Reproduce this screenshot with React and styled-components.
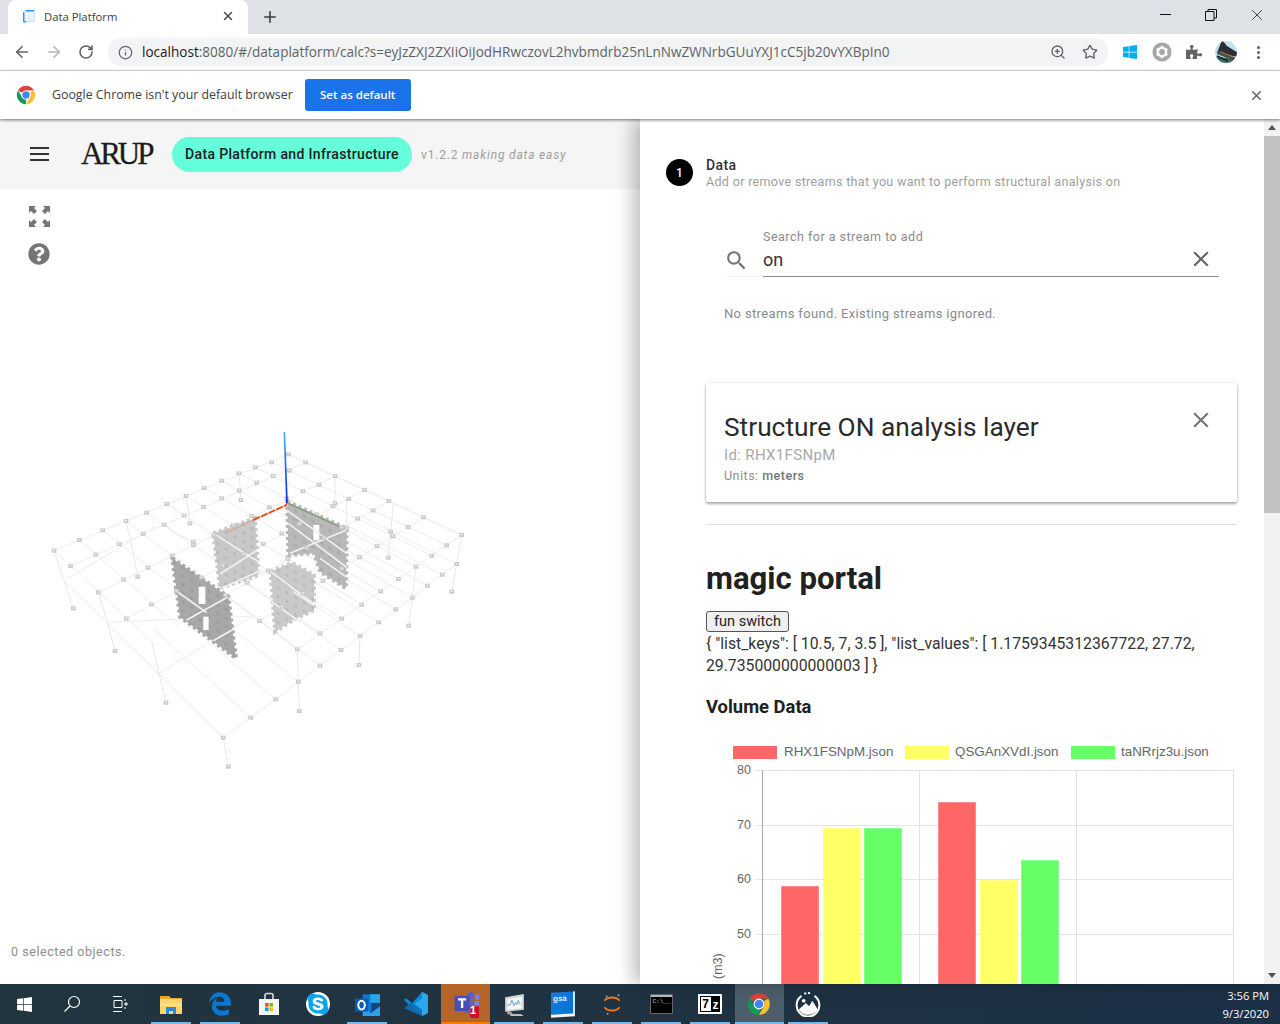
import React from "react";
import styled, { createGlobalStyle } from "styled-components";
import { ArrowLeft, ArrowRight, RotateCw, Info, ZoomIn, Star, MoreVertical, Plus, X } from "lucide-react";
import { FaQuestionCircle, FaPuzzlePiece, FaWindows, FaSkype, FaEdgeLegacy } from "react-icons/fa";

const Global = createGlobalStyle`
  html, body { margin: 0; padding: 0; overflow: hidden; background: #fff; }
  * { box-sizing: border-box; }
`;
const UI = `"Open Sans", "Noto Sans", sans-serif`;
const APP = `Roboto, "Liberation Sans", sans-serif`;

const Page = styled.div`display:flex;flex-direction:column;width:1280px;height:1024px;overflow:hidden;font-family:${APP};`;

const TabStrip = styled.div`display:flex;align-items:flex-end;height:34px;background:#dee1e6;padding-left:8px;`;
const Tab = styled.div`display:flex;align-items:center;width:240px;height:34px;padding:0 13px 2px 14px;background:#fff;border-radius:8px 8px 0 0;gap:8px;color:#3c4043;font:11.3px ${UI};`;
const TabTitle = styled.span`flex:1;`;
const NewTab = styled.div`display:flex;align-items:center;justify-content:center;width:44px;height:34px;color:#3c4043;`;
const Spacer = styled.div`flex:1;`;
const WinControls = styled.div`display:flex;align-self:flex-start;height:30px;`;
const WinButton = styled.div`display:flex;align-items:center;justify-content:center;width:46px;height:30px;color:#111;`;

const Toolbar = styled.div`display:flex;align-items:center;height:37px;border-bottom:1px solid #dadce0;background:#fff;padding-left:6px;`;
const NavButton = styled.div`display:flex;align-items:center;justify-content:center;width:32px;height:28px;color:${p => p.$dim ? "#b4b7bb" : "#5f6368"};`;
const Omnibox = styled.div`display:flex;align-items:center;width:1000px;height:28px;margin-left:6px;border-radius:14px;background:#f1f3f4;padding:0 2px 0 10px;color:#5f6368;`;
const Url = styled.div`flex:1;margin-left:9px;font:13.55px ${UI};color:#5f6368;white-space:nowrap;overflow:hidden;`;
const UrlHost = styled.span`color:#202124;`;
const OmniIcon = styled.div`display:flex;width:32px;justify-content:center;color:#5f6368;`;
const ExtSlot = styled.div`display:flex;align-items:center;justify-content:center;width:32px;color:#5f6368;`;
const Exts = styled.div`display:flex;align-items:center;margin-left:6px;`;

const InfoBar = styled.div`display:flex;align-items:center;position:relative;z-index:3;height:48px;background:#fff;padding-left:15px;box-shadow:0 1px 3px rgba(0,0,0,.55);`;
const InfoText = styled.div`margin-left:15px;padding-bottom:1px;font:12.35px ${UI};color:#3c4043;`;
const DefaultButton = styled.div`display:flex;align-items:center;justify-content:center;width:106px;height:32px;margin-left:12px;padding-bottom:2px;border-radius:3px;background:#1a73e8;color:#fff;font:600 11.5px ${UI};`;
const InfoClose = styled.div`display:flex;margin-right:16px;color:#5f6368;`;

const Main = styled.div`display:flex;flex:1;min-height:0;`;
const LeftPane = styled.div`display:flex;flex-direction:column;width:640px;`;
const AppHeader = styled.div`display:flex;align-items:center;height:70px;background:#f5f5f5;padding-left:30px;`;
const Burger = styled.div`display:flex;flex-direction:column;gap:4px;width:19px;`;
const BurgerLine = styled.div`height:2px;background:#333;`;
const Logo = styled.div`width:72px;margin-left:32px;font:31px "Liberation Serif", serif;letter-spacing:-3.1px;color:#1c1c1c;-webkit-text-stroke:.3px #1c1c1c;white-space:nowrap;`;
const Pill = styled.div`display:flex;align-items:center;justify-content:center;width:240px;height:35px;margin-left:19px;border-radius:18px;background:#64ffda;font:500 14px ${APP};letter-spacing:.34px;color:#212121;`;
const Version = styled.div`margin:2px 0 0 9px;font:12px ${APP};letter-spacing:.82px;color:#9e9e9e;`;
const Canvas = styled.div`position:relative;flex:1;`;
const Tools = styled.div`display:flex;flex-direction:column;align-items:center;gap:16px;width:22px;margin:17px 0 0 28px;color:#757575;`;
const Scene = styled.svg`position:absolute;left:40px;top:231px;`;
const Status = styled.div`position:absolute;left:11px;bottom:25px;font:12.5px ${APP};letter-spacing:.55px;color:#8d8d8d;`;

const RightPane = styled.div`display:flex;flex:1;position:relative;z-index:2;background:#fff;box-shadow:-6px 0 18px rgba(0,0,0,.28);min-width:0;`;
const Content = styled.div`flex:1;overflow:hidden;padding:37px 27px 0 26px;min-width:0;`;
const Step = styled.div`display:flex;align-items:center;gap:13px;height:34px;`;
const StepDot = styled.div`display:flex;align-items:center;justify-content:center;width:27px;height:27px;margin-top:-1px;border-radius:50%;background:#000;color:#fff;font:500 12px ${APP};`;
const StepTitle = styled.div`font:500 14px/17px ${APP};letter-spacing:.4px;color:#333;`;
const StepSub = styled.div`margin-top:-1px;font:12.5px/17px ${APP};letter-spacing:.33px;color:#9e9e9e;`;
const Body = styled.div`margin-left:40px;`;
const SearchBox = styled.div`display:flex;margin-top:40px;padding:0 18px;`;
const SearchIconSlot = styled.div`display:flex;align-items:center;width:39px;height:33px;margin-top:14px;color:#757575;border-bottom:1px solid #f5f5f5;`;
const SearchField = styled.div`flex:1;`;
const FieldLabel = styled.div`font:12.5px/14px ${APP};letter-spacing:.49px;color:#8a8a8a;`;
const FieldInput = styled.div`display:flex;align-items:center;justify-content:space-between;height:33px;padding:0 5px 2px 0;border-bottom:1px solid #8a8a8a;font:18px ${APP};color:#333;`;
const FieldClear = styled.span`display:flex;color:#666;`;
const Notice = styled.div`margin:29px 18px 0;font:13px/16px ${APP};letter-spacing:.35px;color:#8a8a8a;`;
const Card = styled.div`display:flex;justify-content:space-between;height:119px;margin-top:61px;padding:27px 23px 0 18px;border-radius:2px;background:#fff;box-shadow:0 2px 3px rgba(0,0,0,.32),0 0 3px rgba(0,0,0,.12);`;
const CardTitle = styled.div`font:26.3px/34px ${APP};color:#2b2b2b;`;
const CardId = styled.div`font:15px/22px ${APP};letter-spacing:.35px;color:#a8a8a8;`;
const CardUnits = styled.div`font:12.5px/20px ${APP};letter-spacing:.5px;color:#8d8d8d;`;
const CardUnitsValue = styled.b`font-weight:500;color:#757575;`;
const CardClose = styled.div`margin-top:-3px;color:#757575;`;
const Rule = styled.div`height:1px;margin-top:22px;background:#e0e0e0;`;
const H1 = styled.h1`margin:35px 0 0;font:700 31.1px/38px ${APP};color:#212121;`;
const FunButton = styled.button`display:block;width:83px;height:21px;margin-top:13px;padding:0;border:1px solid #555;border-radius:3px;background:#efefef;font:14.5px ${APP};color:#222;`;
const Json = styled.div`margin-top:1px;font:15.75px/22px ${APP};color:#333;`;
const H3 = styled.h3`margin:19px 0 0;font:700 18.4px/22px ${APP};color:#212121;`;
const Chart = styled.svg`display:block;margin-top:22px;font-family:"Liberation Sans",sans-serif;`;

const ScrollBar = styled.div`display:flex;flex-direction:column;width:16px;background:#f1f1f1;`;
const ScrollArrow = styled.div`display:flex;align-items:center;justify-content:center;height:17px;flex:none;`;
const ScrollThumb = styled.div`height:377px;background:#c1c1c1;flex:none;`;
const ScrollFill = styled.div`flex:1;`;

const Taskbar = styled.div`display:flex;height:40px;background:linear-gradient(90deg,#21353f,#1c3046);`;
const SysItem = styled.div`display:flex;align-items:center;justify-content:center;width:48px;color:#fff;`;
const TaskGap = styled.div`width:2.5px;`;
const TaskItem = styled.div`
  display:flex;align-items:center;justify-content:center;position:relative;width:49px;
  background:${p => p.$bg || "transparent"};
  &::after{content:"";display:${p => p.$on ? "block" : "none"};position:absolute;bottom:0;left:${p => p.$bg ? 0 : "4px"};right:${p => p.$bg ? 0 : "5px"};height:2px;background:${p => p.$on === "orange" ? "#ff7a00" : "#76b9ed"};}
`;
const Clock = styled.div`margin-left:auto;padding:3px 11px 0 0;text-align:right;font:11.2px/18px ${UI};color:#fff;`;

const Ico = ({ s = 24, v = 24, children }) => <svg width={s} height={s} viewBox={`0 0 ${v} ${v}`}>{children}</svg>;
const Mdi = ({ s, d }) => <svg width={s} height={s} viewBox="0 0 24 24" fill="currentColor"><path d={d} /></svg>;
const CLOSE = "M19,6.41L17.59,5L12,10.59L6.41,5L5,6.41L10.59,12L5,17.59L6.41,19L12,13.41L17.59,19L19,17.59L13.41,12L19,6.41Z";
const MAGNIFY = "M9.5,3A6.5,6.5 0 0,1 16,9.5C16,11.11 15.41,12.59 14.44,13.73L14.71,14H15.5L20.5,19L19,20.5L14,15.5V14.71L13.73,14.44C12.59,15.41 11.11,16 9.5,16A6.5,6.5 0 0,1 3,9.5A6.5,6.5 0 0,1 9.5,3M9.5,5C7,5 5,7 5,9.5C5,12 7,14 9.5,14C12,14 14,12 14,9.5C14,7 12,5 9.5,5Z";
const Wedge = "M3.34 7A10 10 0 0 1 20.66 7H12A5 5 0 0 0 7.67 9.5Z";
const ChromeLogo = ({ s }) => (
  <Ico s={s}>
    <path d={Wedge} fill="#db4437" />
    <path d={Wedge} fill="#fbc02d" transform="rotate(120 12 12)" />
    <path d={Wedge} fill="#0f9d58" transform="rotate(240 12 12)" />
    <circle cx="12" cy="12" r="5" fill="#fff" />
    <circle cx="12" cy="12" r="4" fill="#4285f4" />
  </Ico>
);
const Favicon = () => (
  <Ico s={14}>
    <path d="M6 3h15v18H6z" fill="#eaf3ff" />
    <path d="M3 5.5V21a1 1 0 0 0 1 1h3M6 3h15" stroke="#2196f3" strokeWidth="2.6" fill="none" />
    <path d="M21 3v18H7" stroke="#bbdefb" strokeWidth="1.6" fill="none" />
  </Ico>
);
const MinimizeIcon = () => <svg width="11" height="2"><path d="M0 .5h11" stroke="#111" /></svg>;
const RestoreIcon = () => (
  <svg width="12" height="12" viewBox="0 0 12 12" fill="none" stroke="#111"><path d="M.5 2.5h8.5v9H.5zM3 2.5V.5h8.5v8.5H9" /></svg>
);
const ExpandIcon = () => (
  <svg width="21" height="21" viewBox="0 0 21 21" fill="currentColor">
    {[0, 90, 180, 270].map(r => (
      <g key={r} transform={`rotate(${r} 10.5 10.5)`}>
        <path d="M0 0h7L5 2 8 5 5 8 2 5 0 7z" />
      </g>
    ))}
  </svg>
);
const GearExt = () => (
  <Ico s={20}>
    <circle cx="12" cy="12" r="11.500" fill="#a6a6a6" />
    <circle cx="12" cy="12" r="5" fill="none" stroke="#fff" strokeWidth="3" />
    <path d="M12 4.500v3M12 16.500v3M5.500 8.200l2.600 1.500M15.900 14.300l2.600 1.500M5.500 15.800l2.600-1.500M15.900 9.700l2.600-1.500" stroke="#fff" strokeWidth="2.600" />
  </Ico>
);
const Avatar = () => (
  <svg width="22" height="22" viewBox="0 0 22 22">
    <clipPath id="avatarClip"><circle cx="11" cy="11" r="11" /></clipPath>
    <g clipPath="url(#avatarClip)">
      <rect width="22" height="22" fill="#bfe3ee" />
      <path d="M-1 16 22 18v5H-1z" fill="#3f6f5a" />
      <path d="M7-1 12 5l11 7v4L2 12z" fill="#2a2f33" />
      <path d="M3 9l18 8-2 3L2 13z" fill="#41564d" />
      <path d="M6 11l12 5" stroke="#b8643e" strokeWidth="1.200" />
      <path d="M2 15l11 5" stroke="#1b1f24" strokeWidth="1.500" />
    </g>
  </svg>
);

const FolderIcon = () => (
  <Ico s={24}>
    <path d="M1 4h9l2 2h11v3H1z" fill="#e8a92b" />
    <path d="M1 7h22v15H1z" fill="#ffd66b" />
    <path d="M7 22v-7h10v7h-3v-3h-4v3z" fill="#2f8bd8" />
    <path d="M1 12h22v2H1z" fill="#ffe08c" />
  </Ico>
);
const StoreIcon = () => (
  <Ico s={24}>
    <path d="M8 7V3.5A2 2 0 0 1 10 1.5h4a2 2 0 0 1 2 2V7" stroke="#ddd" strokeWidth="1.600" fill="none" />
    <path d="M2 7h20v16H2z" fill="#f5f5f5" />
    <path d="M8 11h3.600v3.600H8z" fill="#f25022" /><path d="M12.400 11H16v3.600h-3.600z" fill="#7fba00" />
    <path d="M8 15.400h3.600V19H8z" fill="#00a4ef" /><path d="M12.400 15.400H16V19h-3.600z" fill="#ffb900" />
  </Ico>
);
const SkypeWrap = styled.div`display:flex;border-radius:50%;background:#fff;`;
const SkypeIcon = () => <SkypeWrap><FaSkype size={24} color="#0aa5ee" /></SkypeWrap>;
const OutlookIcon = () => (
  <Ico s={26}>
    <path d="M8 3h14v8H8z" fill="#0f78d4" /><path d="M15 3h9v8h-9z" fill="#28a8ea" />
    <path d="M8 11h9v8H8z" fill="#0f78d4" /><path d="M16 11h8v8h-8z" fill="#14447d" />
    <path d="M8 15l8 5 8-6v9H8z" fill="#2ba1ec" />
    <rect x="1" y="7" width="12" height="12" fill="#0a5cad" />
    <ellipse cx="7" cy="13" rx="3" ry="4" fill="none" stroke="#fff" strokeWidth="1.800" />
  </Ico>
);
const VsCodeIcon = () => (
  <Ico s={26}>
    <path d="M17.500 1 23 3.600v16.800L17.500 23 7 13l10.500-12z" fill="#0a8ad6" />
    <path d="M17.500 1 23 3.600v16.800L17.500 23V17l-7-5 7-5z" fill="#2aa8ee" />
    <path d="M1 8l2-1 14.500 11V23L1 16l4.500-4z" fill="#0f6fb5" opacity=".95" />
    <path d="M1 8l2-1 5 4-3 1.500z" fill="#0a86d2" />
  </Ico>
);
const TeamsWrap = styled.div`position:relative;display:flex;`;
const TeamsBadge = styled.span`position:absolute;left:17px;top:14px;width:10px;text-align:center;font:700 11px "Liberation Sans",sans-serif;color:#fff;`;
const TeamsIcon = () => (
  <TeamsWrap>
    <Ico s={28}>
      <circle cx="17" cy="5" r="3.200" fill="#5b5fc7" /><circle cx="23" cy="6" r="2.400" fill="#7b83eb" />
      <rect x="12" y="9" width="10" height="11" rx="2" fill="#6264a7" /><rect x="20" y="9.500" width="6" height="8" rx="1.500" fill="#7b83eb" />
      <rect x="3" y="5" width="13" height="13" rx="1" fill="#464eb8" />
      <path d="M6 8h7M9.500 8v7.500" stroke="#fff" strokeWidth="2" />
      <circle cx="22" cy="20" r="6.500" fill="#c4122f" stroke="#b5652a" strokeWidth=".8" />
    </Ico>
    <TeamsBadge>1</TeamsBadge>
  </TeamsWrap>
);
const PerfIcon = () => (
  <Ico s={25}>
    <path d="M5 17l5 3v3l-5-2z" fill="#9e9e9e" /><path d="M9 21h9l3 2H8z" fill="#bdbdbd" />
    <path d="M3 5l18-3v15L3 19z" fill="#d6d6d6" /><path d="M5 7l14-2.400v11L5 17z" fill="#f4f6f8" />
    <path d="M5 13l3-1 1.500-4 2 5 1.500-3 1.500 2 1-4 2 4" stroke="#5b9bd5" strokeWidth=".9" fill="none" />
  </Ico>
);
const GsaWrap = styled.div`width:24px;height:25px;background:linear-gradient(120deg,#0d7fe6,#0a6fd0);border-right:2px solid #cfe6fb;border-bottom:3px solid #eaf4ff;transform:skewY(-3deg);padding:2px 0 0 2px;`;
const GsaText = styled.div`font:700 8px/9px "Liberation Sans",sans-serif;color:#dcecfb;`;
const GsaIcon = () => <GsaWrap><GsaText>gsa</GsaText></GsaWrap>;
const SpinIcon = () => (
  <Ico s={26}>
    <path d="M5 9c3-4 11-4 14 0" stroke="#ee7a22" strokeWidth="1.800" fill="none" />
    <path d="M5 15c3 4 11 4 14 0" stroke="#ee7a22" strokeWidth="1.800" fill="none" />
    <circle cx="7" cy="5" r=".9" fill="#9e9e9e" /><circle cx="18" cy="4" r=".9" fill="#9e9e9e" /><circle cx="8" cy="21" r=".9" fill="#9e9e9e" />
  </Ico>
);
const CmdWrap = styled.div`width:23px;height:20px;background:#000;border:1px solid #666;`;
const CmdBar = styled.div`height:2px;background:#bbb;`;
const CmdText = styled.div`font:6px/10px "Liberation Mono",monospace;color:#ccc;padding-left:2px;`;
const CmdIcon = () => <CmdWrap><CmdBar /><CmdText>C:\__</CmdText></CmdWrap>;
const ZipWrap = styled.div`display:flex;align-items:center;justify-content:center;gap:1px;width:24px;height:20px;background:#000;border:2px solid #fff;`;
const ZipSeven = styled.span`width:10px;height:14px;background:#fff;color:#000;text-align:center;font:700 12px/14px "Liberation Sans",sans-serif;`;
const ZipZ = styled.span`width:8px;height:14px;background:#000;color:#fff;text-align:center;font:700 12px/16px "Liberation Sans",sans-serif;`;
const SevenZip = () => <ZipWrap><ZipSeven>7</ZipSeven><ZipZ>z</ZipZ></ZipWrap>;
const PhotoIcon = () => (
  <Ico s={26}>
    <path d="M6 4.500A10.500 10.500 0 1 0 18 4.500" fill="none" stroke="#fff" strokeWidth="1.800" />
    <path d="M8.500 2.500A10.500 10.500 0 0 1 15 2.300" fill="none" stroke="#fff" strokeWidth="1.800" strokeDasharray="2 1.500" />
    <circle cx="8" cy="9" r="1.700" fill="#fff" />
    <path d="M3.500 17 10 11l3 3 3-5 5 8c-2 3-5 5-9 5s-6.500-2-8.500-5z" fill="#fff" />
  </Ico>
);

/* ---------- structural model (drawn in 3x zoom coordinates) ---------- */
const backLeft = [[42,392],[118,360],[188,331],[258,303],[320,278],[380,252],[438,228],[492,204],[545,182],[597,160],[646,142],[695,127],[745,103]];
const frontA = [[335,663],[415,618],[505,585],[772,688],[840,640],[905,596],[965,554],[1022,514],[1075,477],[1128,440],[1175,407],[1220,376],[1265,345]];
const frontFull = [[535,855],[610,800],[690,745],[772,688],[840,640],[905,596],[965,554],[1022,514],[1075,477],[1128,440],[1175,407],[1220,376],[1265,345]];
const frontB = [[550,953],[632,893],[707,838],[775,785],[840,737],[903,690],[960,648],[1016,607],[1067,568],[1117,533],[1162,497],[1207,464],[1250,432]];
const vs = [0.1, 0.27, 0.44, 0.58, 0.78];
const mix = (a, b, t) => [a[0] + (b[0] - a[0]) * t, a[1] + (b[1] - a[1]) * t];
const columns = [
  [[42,392],[72,482],[100,565]], [[175,515],[202,607],[225,693]], [[335,663],[357,760],[378,848]],
  [[550,953],[565,1040]], [[772,688],[775,785],[778,873]], [[960,648],[957,735]], [[1128,440],[1117,533],[1106,617]],
  [[1265,345],[1250,432],[1235,515]], [[1052,335],[1045,413]], [[258,303],[278,390],[293,470]], [[375,310],[395,335],[460,365]],
  [[597,160],[603,240]], [[438,228],[450,310]], [[885,172],[885,250]], [[920,237],[920,325]], [[1060,252],[1052,335]],
];
const walls = [
  { pts: "397,415 565,530 588,715 420,590", fill: "#a8a8a8", holes: [[476,500,20,52],[490,590,16,40]], bars: [[405,510,500,578],[440,600,565,530],[520,662,580,628]] },
  { pts: "520,340 645,295 655,465 540,505", fill: "#c8c8c8", holes: [], bars: [[520,340,660,428],[540,462,652,390],[545,505,660,452]] },
  { pts: "692,455 755,428 822,465 822,570 760,600 705,635", fill: "#cacaca", holes: [], bars: [[692,455,822,552],[695,545,772,600],[760,515,822,556]] },
  { pts: "742,245 920,325 918,505 840,455 822,400 745,405", fill: "#b8b8b8", holes: [[820,315,18,46]], bars: [[742,272,920,400],[745,310,920,442],[750,400,920,330],[840,415,918,470]] },
];

const Node = ({ p }) => (
  <g>
    <rect x={p[0] - 7} y={p[1] - 6} width="14" height="12" fill="#c9c9c9" />
    <rect x={p[0] - 3} y={p[1] - 3} width="6" height="4" fill="#efefef" />
  </g>
);

const Structure = () => {
  const lines = [];
  const nodes = [];
  backLeft.forEach((b, i) => {
    const f = frontA[i];
    lines.push([b, f]);
    nodes.push(b);
    if (i >= 3) nodes.push(f);
    vs.forEach(v => { const full = mix(b, frontFull[i], v); if (i >= 3 || v < 0.58) nodes.push(full); });
    const start = mix([b[0] + 30, b[1] + 90], frontB[i], 0.4);
    lines.push([start, frontB[i]]);
    nodes.push(frontB[i]);
    if (i > 0) lines.push([frontB[i - 1], frontB[i]]);
  });
  vs.concat([0, 1]).forEach(v => {
    const pts = backLeft.map((b, i) => mix(b, frontFull[i], v));
    if (v === 0) lines.push([pts[0], pts[12]]);
    else if (v === 1) lines.push([pts[3], pts[12]]);
    else lines.push([pts[v < 0.58 ? 0 : 3], pts[12]]);
  });
  lines.push([[745,103],[1265,345]], [[72,482],[550,953]], [[202,607],[640,588]], [[357,760],[640,588]], [[72,482],[345,320]]);
  return (
    <Scene width="430" height="360" viewBox="0 0 1290 1080">
      <defs>
        <filter id="soft" x="-5%" y="-5%" width="110%" height="110%"><feGaussianBlur stdDeviation="1.800" /></filter>
        <linearGradient id="zAxis" x1="0" y1="0" x2="0" y2="1">
          <stop offset="0" stopColor="#4db2ff" /><stop offset=".5" stopColor="#1a6bff" /><stop offset="1" stopColor="#0a22d8" />
        </linearGradient>
        <pattern id="mesh" width="26" height="26" patternUnits="userSpaceOnUse" patternTransform="skewY(30)">
          <rect x="8" y="8" width="9" height="9" fill="#000" opacity=".07" />
        </pattern>
      </defs>
      <g filter="url(#soft)">
        {lines.map((l, i) => <line key={i} x1={l[0][0]} y1={l[0][1]} x2={l[1][0]} y2={l[1][1]} stroke="#ececec" strokeWidth="3" />)}
        {columns.map((c, i) => <polyline key={i} points={c.map(p => p.join(",")).join(" ")} fill="none" stroke="#e8e8e8" strokeWidth="3" />)}
        {walls.map((w, i) => (
          <g key={i}>
            <polygon points={w.pts} fill={w.fill} stroke={w.fill} strokeWidth="12" strokeDasharray="9 9" />
            <polygon points={w.pts} fill="url(#mesh)" />
            {w.holes.map((h, j) => <rect key={j} x={h[0]} y={h[1]} width={h[2]} height={h[3]} fill="#fff" />)}
            {w.bars.map((b, j) => <line key={j} x1={b[0]} y1={b[1]} x2={b[2]} y2={b[3]} stroke="#f2f2f2" strokeWidth="5" />)}
          </g>
        ))}
        {nodes.map((p, i) => <Node key={i} p={p} />)}
        {columns.map(c => c[c.length - 1]).map((p, i) => <Node key={i} p={p} />)}
        <line x1="555" y1="340" x2="640" y2="300" stroke="#d9a27e" strokeWidth="3" />
        <line x1="640" y1="300" x2="741" y2="254" stroke="#ff4a1f" strokeWidth="6" strokeDasharray="22 3" />
        <line x1="745" y1="250" x2="895" y2="318" stroke="#7c9a6a" strokeWidth="4" />
        <line x1="733" y1="35" x2="741" y2="250" stroke="url(#zAxis)" strokeWidth="5" />
      </g>
    </Scene>
  );
};

const series = [
  { x: 781, w: 38, top: 886, c: "#ff6666" }, { x: 823, w: 38, top: 828, c: "#ffff66" }, { x: 864, w: 38, top: 828, c: "#66ff66" },
  { x: 938, w: 38, top: 802, c: "#ff6666" }, { x: 980, w: 38, top: 880, c: "#ffff66" }, { x: 1021, w: 38, top: 860, c: "#66ff66" },
];
const legend = [
  { x: 733, tx: 784, c: "#ff6666", t: "RHX1FSNpM.json" },
  { x: 905, tx: 955, c: "#ffff66", t: "QSGAnXVdI.json" },
  { x: 1071, tx: 1121, c: "#66ff66", t: "taNRrjz3u.json" },
];
const ticks = [[770, "80"], [825, "70"], [879, "60"], [934, "50"]];

const VolumeChart = () => (
  <Chart width="531" height="300" viewBox="706 740 531 300">
    {legend.map(l => (
      <g key={l.t}>
        <rect x={l.x} y="746" width="44" height="13" fill={l.c} />
        <text x={l.tx} y="756" fontSize="13.4" fill="#666">{l.t}</text>
      </g>
    ))}
    {ticks.map(([y, t]) => (
      <g key={t}>
        <line x1="755" x2="1233" y1={y + .5} y2={y + .5} stroke="#e5e5e5" />
        <text x="751" y={y + 4} fontSize="12.5" textAnchor="end" fill="#666">{t}</text>
      </g>
    ))}
    {[919, 1076, 1233].map(x => <line key={x} x1={x + .5} x2={x + .5} y1="770" y2="1040" stroke="#e2e2e2" />)}
    <line x1="762.500" x2="762.500" y1="770" y2="1040" stroke="#a8a8a8" />
    {series.map(b => <rect key={b.x} x={b.x + .5} y={b.top + .5} width={b.w - 1} height={1040 - b.top} fill={b.c} stroke={b.c} strokeOpacity=".5" />)}
    <text transform="translate(722 979) rotate(-90)" fontSize="12.5" fill="#666">(m3)</text>
  </Chart>
);

export default function App() {
  return (
    <Page>
      <Global />
      <TabStrip>
        <Tab><Favicon /><TabTitle>Data Platform</TabTitle><X size={14} strokeWidth={2.4} color="#444" /></Tab>
        <NewTab><Plus size={18} strokeWidth={2.2} /></NewTab>
        <Spacer />
        <WinControls>
          <WinButton><MinimizeIcon /></WinButton>
          <WinButton><RestoreIcon /></WinButton>
          <WinButton><X size={18} strokeWidth={1} /></WinButton>
        </WinControls>
      </TabStrip>
      <Toolbar>
        <NavButton><ArrowLeft size={18} strokeWidth={2.2} /></NavButton>
        <NavButton $dim><ArrowRight size={18} strokeWidth={2.2} /></NavButton>
        <NavButton><RotateCw size={16} strokeWidth={2.4} /></NavButton>
        <Omnibox>
          <Info size={15} strokeWidth={2} />
          <Url><UrlHost>localhost</UrlHost>:8080/#/dataplatform/calc?s=eyJzZXJ2ZXIiOiJodHRwczovL2hvbmdrb25nLnNwZWNrbGUuYXJ1cC5jb20vYXBpIn0</Url>
          <OmniIcon><ZoomIn size={16} /></OmniIcon>
          <OmniIcon><Star size={16} /></OmniIcon>
        </Omnibox>
        <Exts>
          <ExtSlot><FaWindows size={16} color="#00adef" /></ExtSlot>
          <ExtSlot><GearExt /></ExtSlot>
          <ExtSlot><FaPuzzlePiece size={16} /></ExtSlot>
          <ExtSlot><Avatar /></ExtSlot>
          <ExtSlot><MoreVertical size={17} strokeWidth={2.4} /></ExtSlot>
        </Exts>
      </Toolbar>
      <InfoBar>
        <ChromeLogo s={22} />
        <InfoText>Google Chrome isn't your default browser</InfoText>
        <DefaultButton>Set as default</DefaultButton>
        <Spacer />
        <InfoClose><X size={15} strokeWidth={2.4} /></InfoClose>
      </InfoBar>
      <Main>
        <LeftPane>
          <AppHeader>
            <Burger><BurgerLine /><BurgerLine /><BurgerLine /></Burger>
            <Logo>ARUP</Logo>
            <Pill>Data Platform and Infrastructure</Pill>
            <Version>v1.2.2 <i>making data easy</i></Version>
          </AppHeader>
          <Canvas>
            <Tools><ExpandIcon /><FaQuestionCircle size={22} /></Tools>
            <Structure />
            <Status>0 selected objects.</Status>
          </Canvas>
        </LeftPane>
        <RightPane>
          <Content>
            <Step>
              <StepDot>1</StepDot>
              <div>
                <StepTitle>Data</StepTitle>
                <StepSub>Add or remove streams that you want to perform structural analysis on</StepSub>
              </div>
            </Step>
            <Body>
              <SearchBox>
                <SearchIconSlot><Mdi s={25} d={MAGNIFY} /></SearchIconSlot>
                <SearchField>
                  <FieldLabel>Search for a stream to add</FieldLabel>
                  <FieldInput>on<FieldClear><Mdi s={26} d={CLOSE} /></FieldClear></FieldInput>
                </SearchField>
              </SearchBox>
              <Notice>No streams found. Existing streams ignored.</Notice>
              <Card>
                <div>
                  <CardTitle>Structure ON analysis layer</CardTitle>
                  <CardId>Id: RHX1FSNpM</CardId>
                  <CardUnits>Units: <CardUnitsValue>meters</CardUnitsValue></CardUnits>
                </div>
                <CardClose><Mdi s={26} d={CLOSE} /></CardClose>
              </Card>
              <Rule />
              <H1>magic portal</H1>
              <FunButton>fun switch</FunButton>
              <Json>{'{ "list_keys": [ 10.5, 7, 3.5 ], "list_values": [ 1.1759345312367722, 27.72, 29.735000000000003 ] }'}</Json>
              <H3>Volume Data</H3>
              <VolumeChart />
            </Body>
          </Content>
          <ScrollBar>
            <ScrollArrow><svg width="8" height="5"><path d="M4 0l4 5H0z" fill="#505050" /></svg></ScrollArrow>
            <ScrollThumb />
            <ScrollFill />
            <ScrollArrow><svg width="8" height="5"><path d="M0 0h8L4 5z" fill="#505050" /></svg></ScrollArrow>
          </ScrollBar>
        </RightPane>
      </Main>
      <Taskbar>
        <SysItem><FaWindows size={17} /></SysItem>
        <SysItem><svg width="18" height="18" viewBox="0 0 18 18" fill="none" stroke="#fff" strokeWidth="1.200"><circle cx="11" cy="7" r="5.500" /><path d="M7 11 1.500 16.500" /></svg></SysItem>
        <SysItem><svg width="16" height="16" viewBox="0 0 16 16" fill="none" stroke="#fff"><path d="M1 .5h9M1 15.500h9M2 4.500h8v7H2zM13 3v2M13 7h2v2h-2zM13 11v2" /></svg></SysItem>
        <TaskGap />
        <TaskItem $on="blue"><FolderIcon /></TaskItem>
        <TaskItem $on="blue"><FaEdgeLegacy size={24} color="#0a78d4" /></TaskItem>
        <TaskItem><StoreIcon /></TaskItem>
        <TaskItem><SkypeIcon /></TaskItem>
        <TaskItem $on="blue"><OutlookIcon /></TaskItem>
        <TaskItem><VsCodeIcon /></TaskItem>
        <TaskItem $on="orange" $bg="#b5652a"><TeamsIcon /></TaskItem>
        <TaskItem $on="blue"><PerfIcon /></TaskItem>
        <TaskItem $on="blue"><GsaIcon /></TaskItem>
        <TaskItem $on="blue"><SpinIcon /></TaskItem>
        <TaskItem $on="blue"><CmdIcon /></TaskItem>
        <TaskItem $on="blue"><SevenZip /></TaskItem>
        <TaskItem $on="blue" $bg="#4c5f6c"><ChromeLogo s={26} /></TaskItem>
        <TaskItem $on="blue"><PhotoIcon /></TaskItem>
        <Clock>3:56 PM<br />9/3/2020</Clock>
      </Taskbar>
    </Page>
  );
}
